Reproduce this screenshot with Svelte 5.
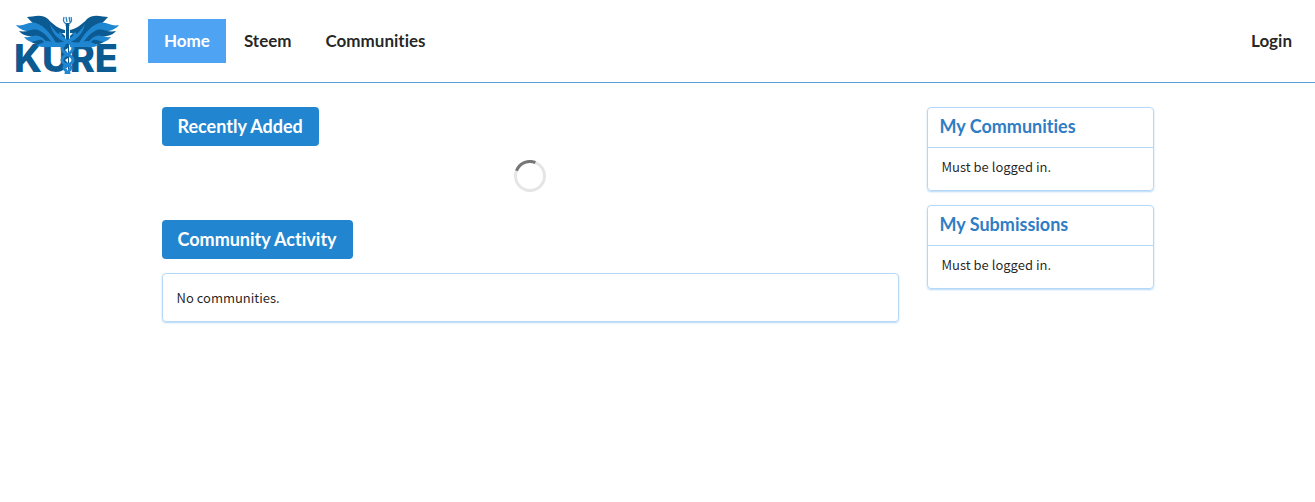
<script lang="ts">
	const navItems = [
		{ label: 'Home', href: '/', active: true },
		{ label: 'Steem', href: '/steem', active: false },
		{ label: 'Communities', href: '/communities', active: false }
	];

	const panels = [
		{ title: 'My Communities', text: 'Must be logged in.' },
		{ title: 'My Submissions', text: 'Must be logged in.' }
	];
</script>

<svelte:head>
	<title>KURE</title>
</svelte:head>

{#snippet wing()}
	<!-- feathers, from the top edge of the wing down -->
	<path fill="#0b5a92" d="M27 17C32 17 42 13 48 19C53 25 60 29 65 30V46H50C46 34 36 27 27 17Z" />
	<path fill="#1f86d1" d="M16 25C24 27 28 21 36 23C45 26 52 35 57 45H48C42 35 36 33 26 31Q19 29 16 25Z" />
	<path fill="#0b5a92" d="M19 31C27 33 32 28 38 30C45 33 50 39 53 45H46C41 38 35 37 28 36Q22 35 19 31Z" />
	<path fill="#1f86d1" d="M24 37C31 38 34 34 39 36C44 38 47 42 49 46L43 45C39 41 35 42 31 42Q27 41 24 37Z" />
	<path fill="#0b5a92" d="M31 42C36 42 38 39 42 40L47 45L41 44Q36 45 31 42Z" />
	<path fill="#1f86d1" d="M50 24C52 33 57 39 65 42V38C58 35 54 30 50 24Z" />
	<path fill="#1f86d1" d="M36 45C42 44 44 41 48 41C54 42 58 44 65 41V47H48Q42 48 36 45Z" />
{/snippet}

<div class="page">
	<header class="site-header">
		<a class="logo" href="/" aria-label="KURE">
			<svg viewBox="14 14 106 62" aria-hidden="true">
				<text x="14" y="72">KURE</text>
				{@render wing()}
				<g transform="matrix(-1 0 0 1 135 0)">
					{@render wing()}
				</g>
				<path class="staff" d="M67.5 24V74" />
				<path class="snake" d="M61 33C56 39 73 41 73 48S62 54 62 60S72 64 71 68S66 70 66 74" />
				<path class="snake" d="M74 33C79 39 62 41 62 48S73 54 73 60S63 64 64 68S69 70 69 74" />
				<path class="crown" d="M64 17Q62 23 67.5 24Q73 23 71 17M66 17L67 22M69 17L70 22" />
				<circle cx="67.5" cy="25" r="2" fill="#0b5a92" />
				<path fill="#fff" d="M62 33H65V36ZM73 33H70V36ZM65 50L68 48V53ZM65 60L68 58V63ZM66 68L68 67V71Z" />
			</svg>
		</a>
		<nav class="main-nav">
			{#each navItems as item}
				<a href={item.href} class:active={item.active}>{item.label}</a>
			{/each}
		</nav>
		<a class="login" href="/login">Login</a>
	</header>

	<div class="container">
		<main>
			<section>
				<h2 class="label">Recently Added</h2>
				<div class="loading" role="status" aria-label="Loading">
					<svg class="loader" viewBox="0 0 32 32" aria-hidden="true">
						<circle cx="16" cy="16" r="14.5" stroke="#e5e5e5" />
						<path d="M2.5 10.8A14.5 14.5 0 0 1 21.4 2.5" stroke="#767676" />
					</svg>
				</div>
			</section>

			<section>
				<h2 class="label">Community Activity</h2>
				<div class="segment">No communities.</div>
			</section>
		</main>

		<aside>
			{#each panels as panel}
				<section class="panel">
					<h3>{panel.title}</h3>
					<p>{panel.text}</p>
				</section>
			{/each}
		</aside>
	</div>
</div>

<style>
	:global(body) {
		background: #fff;
	}

	.page {
		font-family: 'Noto Sans CJK SC', 'Noto Sans', sans-serif;
		font-size: 13px;
		line-height: 19px;
		font-variant-ligatures: none;
		color: rgba(0, 0, 0, 0.87);
	}

	.site-header {
		display: flex;
		align-items: center;
		height: 82px;
		border-bottom: 1px solid #5b9fd9;
		font-family: Lato, sans-serif;
	}

	.logo {
		width: 106px;
		margin: 8px 28px 0 14px;
	}

	.logo svg {
		display: block;
		width: 100%;
		overflow: visible;
	}

	.logo text {
		font-family: Inter, sans-serif;
		font-size: 38px;
		font-weight: 800;
		fill: #0b5a92;
	}

	.staff {
		stroke: #0b5a92;
		stroke-width: 3;
	}

	.snake {
		fill: none;
		stroke: #1f86d1;
		stroke-width: 3;
	}

	.crown {
		fill: none;
		stroke: #2f83bd;
		stroke-width: 1.3;
	}

	.main-nav {
		display: flex;
		gap: 2px;
	}

	.main-nav a,
	.login {
		padding: 12px 16px;
		font-size: 17px;
		font-weight: 700;
		line-height: 20px;
		color: rgba(0, 0, 0, 0.87);
		text-decoration: none;
	}

	.main-nav a.active {
		background: #4fa3f3;
		color: #fff;
	}

	.login {
		margin-left: auto;
		padding-right: 23px;
	}

	.container {
		display: flex;
		gap: 28px;
		max-width: 992px;
		margin: 0 auto;
		padding: 24px 14px;
	}

	main {
		flex: 1;
		min-width: 0;
	}

	aside {
		width: 227px;
	}

	.label {
		display: inline-block;
		margin: 0;
		padding: 9px 16px;
		border-radius: 4px;
		background: #2185d0;
		color: #fff;
		font-family: Lato, sans-serif;
		font-size: 18px;
		line-height: 21px;
		vertical-align: top;
	}

	.loading {
		display: flex;
		justify-content: center;
		padding: 14px 0 28px;
	}

	.loader {
		width: 32px;
		height: 32px;
		fill: none;
		stroke-width: 3;
	}

	.segment,
	.panel {
		border: 1px solid #b5d8f7;
		border-radius: 4px;
		box-shadow: 0 1px 2px #b5d8f7;
	}

	.segment {
		margin-top: 14px;
		padding: 14px;
	}

	.panel {
		margin-bottom: 14px;
	}

	.panel h3 {
		margin: 0;
		padding: 8px 12px 10px;
		border-bottom: 1px solid #b5d8f7;
		color: #2f7dc4;
		font-family: Lato, sans-serif;
		font-size: 18px;
		line-height: 21px;
	}

	.panel p {
		margin: 0;
		padding: 9px 14px 14px;
	}

	@media (max-width: 768px) {
		.container {
			flex-direction: column;
		}

		aside {
			width: auto;
		}
	}
</style>
